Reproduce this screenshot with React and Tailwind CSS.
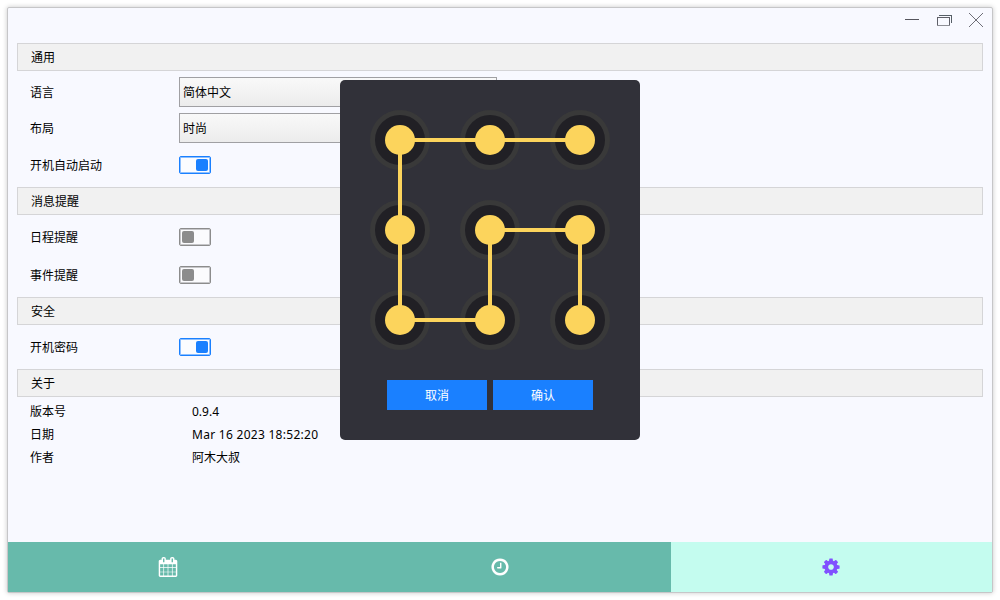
import React from "react";

const CALENDAR =
  "M192 1664h288v-288h-288v288zm352 0h320v-288h-320v288zm-352-352h288v-320h-288v320zm352 0h320v-320h-320v320zm-352-384h288v-288h-288v288zm736 736h320v-288h-320v288zm-384-736h320v-288h-320v288zm768 736h288v-288h-288v288zm-384-352h320v-320h-320v320zm-352-864v-288q0-13-9.5-22.5t-22.5-9.5h-64q-13 0-22.5 9.5t-9.5 22.5v288q0 13 9.5 22.5t22.5 9.5h64q13 0 22.5-9.5t9.5-22.5zm736 864h288v-320h-288v320zm-384-384h320v-288h-320v288zm384 0h288v-288h-288v288zm32-480v-288q0-13-9.5-22.5t-22.5-9.5h-64q-13 0-22.5 9.5t-9.5 22.5v288q0 13 9.5 22.5t22.5 9.5h64q13 0 22.5-9.5t9.5-22.5zm384-64v1280q0 52-38 90t-90 38h-1408q-52 0-90-38t-38-90v-1280q0-52 38-90t90-38h128v-96q0-66 47-113t113-47h64q66 0 113 47t47 113v96h384v-96q0-66 47-113t113-47h64q66 0 113 47t47 113v96h128q52 0 90 38t38 90z";
const CLOCK =
  "M1024 544v448q0 14-9 23t-23 9h-320q-14 0-23-9t-9-23v-64q0-14 9-23t23-9h224v-352q0-14 9-23t23-9h64q14 0 23 9t9 23zm416 352q0-148-73-273t-198-198-273-73-273 73-198 198-73 273 73 273 198 198 273 73 273-73 198-198 73-273zm224 0q0 209-103 385.5t-279.5 279.5-385.5 103-385.5-103-279.5-279.5-103-385.5 103-385.5 279.5-279.5 385.5-103 385.5 103 279.5 279.5 103 385.5z";
const COG =
  "M1152 896q0-106-75-181t-181-75-181 75-75 181 75 181 181 75 181-75 75-181zm512-109v222q0 12-8 23t-20 13l-185 28q-19 54-39 91 35 50 107 138 10 12 10 25t-9 23q-27 37-99 108t-94 71q-12 0-26-9l-138-108q-44 23-91 38-16 136-29 186-7 28-36 28h-222q-14 0-24.5-8.5t-11.5-21.5l-28-184q-49-16-90-37l-141 107q-10 9-25 9-14 0-25-11-126-114-165-168-7-10-7-23 0-12 8-23 15-21 51-66.5t54-70.5q-27-50-41-99l-183-27q-13-2-21-12.5t-8-23.5v-222q0-12 8-23t19-13l186-28q14-46 39-92-40-57-107-138-10-12-10-24 0-10 9-23 26-36 98.5-107.5t94.5-71.5q13 0 26 10l138 107q44-23 91-38 16-136 29-186 7-28 36-28h222q14 0 24.5 8.5t11.5 21.5l28 184q49 16 90 37l142-107q9-9 24-9 13 0 25 10 129 119 165 170 7 8 7 22 0 12-8 23-15 21-51 66.5t-54 70.5q26 50 41 98l183 28q13 2 21 12.5t8 23.5z";

function Section({ children }) {
  return (
    <div className="flex h-7 shrink-0 items-center border border-[#d5d5d7] bg-[#f1f1f1] pt-0.5 pl-[13px]">
      {children}
    </div>
  );
}

function Row({ label, className, children }) {
  return (
    <div className={`flex shrink-0 items-center pl-[13px] ${className}`}>
      <span className="w-[149px] pt-0.5">{label}</span>
      {children}
    </div>
  );
}

function Select({ children }) {
  return (
    <div className="flex h-[30px] w-[318px] items-center border border-[#a0a0a3] bg-linear-to-b from-[#f9f9f9] to-[#ececec] pt-0.5 pl-[3px]">
      {children}
    </div>
  );
}

function Toggle({ on }) {
  return on ? (
    <div className="flex h-[18px] w-8 items-center justify-end rounded-[2px] border border-[#1a80ff] bg-[#fbfcff] pr-[2px] shadow-[inset_0_0_0_1px_#8dbfff]">
      <div className="size-3 rounded-[2px] bg-[#1a80ff]" />
    </div>
  ) : (
    <div className="flex h-[18px] w-8 items-center rounded-[2px] border border-[#8c8c8c] bg-[#fbfbfd] pl-[2px] shadow-[inset_0_0_0_1px_#c6c6c9]">
      <div className="size-3 rounded-[2px] bg-[#8c8c8c]" />
    </div>
  );
}

function Info({ label, value, className = "" }) {
  return (
    <div className="flex h-[23px] items-center pl-[13px]">
      <span className="w-[162px]">{label}</span>
      <span className={className}>{value}</span>
    </div>
  );
}

function Glyph({ d }) {
  return (
    <svg viewBox="0 0 1792 1792" className="size-5" fill="currentColor">
      <path d={d} />
    </svg>
  );
}

function PatternLock() {
  const nodes = [60, 150, 240].flatMap((y) => [60, 150, 240].map((x) => [x, y]));
  return (
    <svg width="300" height="300" viewBox="0 0 300 300" className="block">
      {nodes.map(([x, y]) => (
        <circle key={`${x}-${y}`} cx={x} cy={y} r="27.5" fill="#212025" stroke="#393939" strokeWidth="5" />
      ))}
      <path d="M240 60H60V240H150V150H240V240" fill="none" stroke="#fcd45c" strokeWidth="4" />
      {nodes.map(([x, y]) => (
        <circle key={`${x}-${y}`} cx={x} cy={y} r="15" fill="#fcd45c" />
      ))}
    </svg>
  );
}

function TitleBar() {
  return (
    <div className="flex h-[35px] shrink-0 justify-end pr-2">
      <svg width="80" height="24" viewBox="0 0 80 24" fill="none" shapeRendering="crispEdges">
        <path d="M1 11.5H15" stroke="#55555d" />
        <path d="M33.5 17V9.5H45.5V17" stroke="#5f6068" />
        <path d="M33 17.5H46" stroke="#8e8f96" />
        <path d="M35 7.5H47.5V15" stroke="#565f66" />
        <path d="M65 5L79 19M79 5L65 19" stroke="#6f6f78" shapeRendering="auto" />
      </svg>
    </div>
  );
}

export default function App() {
  return (
    <div className="relative h-[600px] w-[1000px] overflow-hidden bg-white p-[7px] font-['Noto_Sans','Noto_Sans_CJK_SC',sans-serif] text-[12px] leading-4 text-black">
      <div className="flex h-[586px] w-[986px] flex-col rounded-[2px] border border-[#c6c6c8] bg-[#f8f9ff] shadow-[0_0_5px_rgba(0,0,0,0.22)]">
        <TitleBar />
        <div className="flex flex-1 flex-col px-[9px]">
          <Section>通用</Section>
          <Row label="语言" className="h-9 pt-1.5"><Select>简体中文</Select></Row>
          <Row label="布局" className="h-9 pt-1.5"><Select>时尚</Select></Row>
          <Row label="开机自动启动" className="h-11"><Toggle on /></Row>
          <Section>消息提醒</Section>
          <Row label="日程提醒" className="mt-[3px] h-[38px]"><Toggle /></Row>
          <Row label="事件提醒" className="mb-[3px] h-[38px]"><Toggle /></Row>
          <Section>安全</Section>
          <Row label="开机密码" className="h-11"><Toggle on /></Row>
          <Section>关于</Section>
          <div className="pt-[3px]">
            <Info label="版本号" value="0.9.4" />
            <Info label="日期" value="Mar 16 2023 18:52:20" className="tracking-[0.28px]" />
            <Info label="作者" value="阿木大叔" />
          </div>
        </div>
        <div className="flex h-[50px] shrink-0 bg-[#67baab]">
          <div className="flex w-[321px] items-center justify-center pr-px text-white"><Glyph d={CALENDAR} /></div>
          <div className="flex flex-1 items-center justify-center pr-px text-white"><Glyph d={CLOCK} /></div>
          <div className="flex w-[321px] items-center justify-center bg-[#c4fcef] pr-px text-[#8050ff]"><Glyph d={COG} /></div>
        </div>
      </div>

      <div className="absolute top-20 left-[340px] h-[360px] w-[300px] rounded-[5px] bg-[#313139]">
        <PatternLock />
        <div className="flex justify-center gap-1.5 text-white">
          <button className="flex h-[30px] w-[100px] items-center justify-center bg-[#1a80ff] pt-0.5">取消</button>
          <button className="flex h-[30px] w-[100px] items-center justify-center bg-[#1a80ff] pt-0.5">确认</button>
        </div>
      </div>
    </div>
  );
}
